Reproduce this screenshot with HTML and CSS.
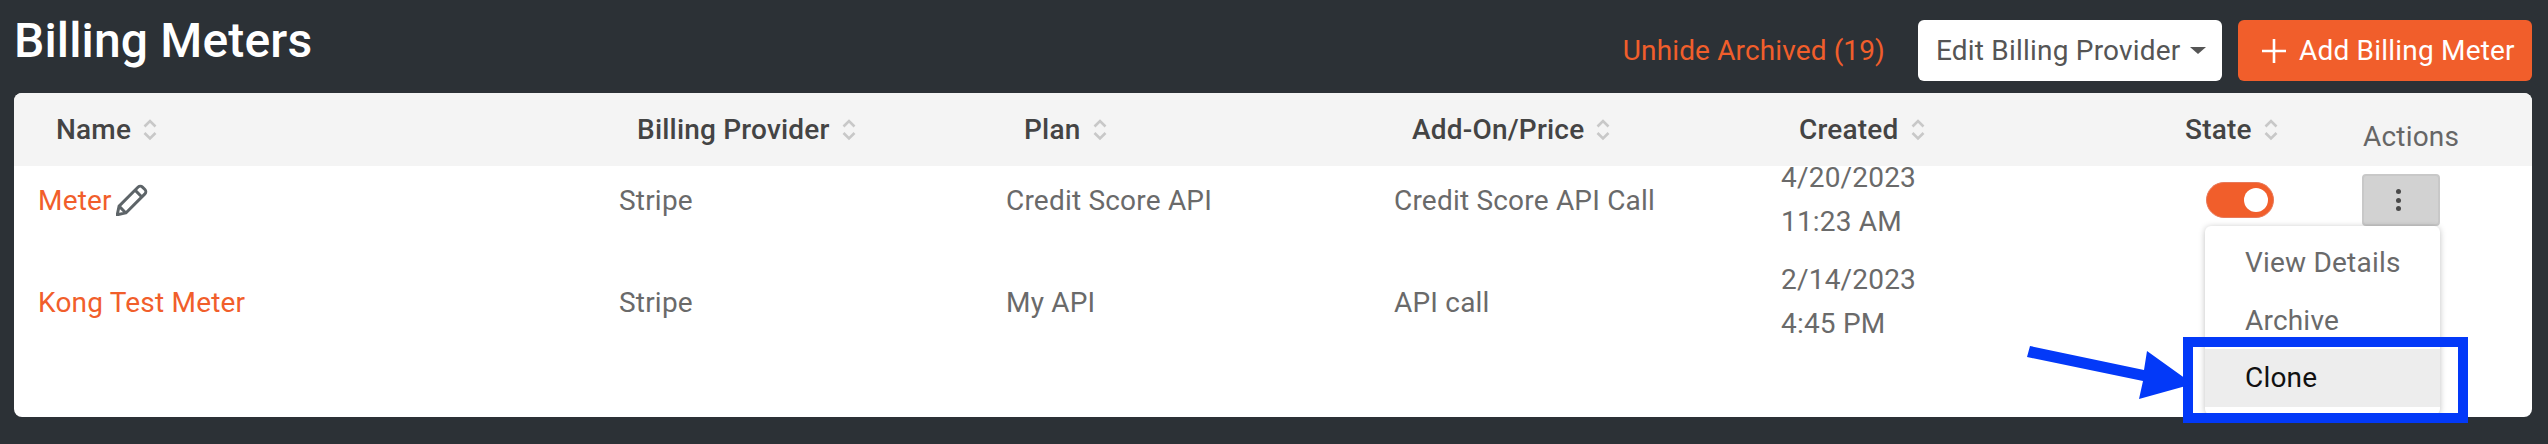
FILE: index.html
```html
<!DOCTYPE html>
<html lang="en">
<head>
<meta charset="utf-8">
<title>Billing Meters</title>
<link rel="stylesheet" href="styles.css">
</head>
<body>
<header class="topbar">
  <h1 class="title">Billing Meters</h1>
  <div class="top-actions">
    <a class="unhide">Unhide Archived (19)</a>
    <button class="btn btn-white">Edit Billing Provider<span class="caret"></span></button>
    <button class="btn btn-orange">
      <svg class="plus" viewBox="0 0 24 24" width="24" height="24"><path d="M12 0v24M0 12h24" stroke="#fff" stroke-width="2.6" fill="none"/></svg>
      Add Billing Meter
    </button>
  </div>
</header>
<main class="card">
  <div class="grid head">
    <div class="th">Name<svg class="sort" viewBox="0 0 14 24" width="14" height="24"><path d="M1.500 8.500L7 3l5.500 5.500M1.500 15L7 20.500 12.500 15" stroke="#c8c8c8" stroke-width="2.600" fill="none"/></svg></div>
    <div class="th">Billing Provider<svg class="sort" viewBox="0 0 14 24" width="14" height="24"><path d="M1.500 8.500L7 3l5.500 5.500M1.500 15L7 20.500 12.500 15" stroke="#c8c8c8" stroke-width="2.600" fill="none"/></svg></div>
    <div class="th">Plan<svg class="sort" viewBox="0 0 14 24" width="14" height="24"><path d="M1.500 8.500L7 3l5.500 5.500M1.500 15L7 20.500 12.500 15" stroke="#c8c8c8" stroke-width="2.600" fill="none"/></svg></div>
    <div class="th">Add-On/Price<svg class="sort" viewBox="0 0 14 24" width="14" height="24"><path d="M1.500 8.500L7 3l5.500 5.500M1.500 15L7 20.500 12.500 15" stroke="#c8c8c8" stroke-width="2.600" fill="none"/></svg></div>
    <div class="th">Created<svg class="sort" viewBox="0 0 14 24" width="14" height="24"><path d="M1.500 8.500L7 3l5.500 5.500M1.500 15L7 20.500 12.500 15" stroke="#c8c8c8" stroke-width="2.600" fill="none"/></svg></div>
    <div class="th">State<svg class="sort" viewBox="0 0 14 24" width="14" height="24"><path d="M1.500 8.500L7 3l5.500 5.500M1.500 15L7 20.500 12.500 15" stroke="#c8c8c8" stroke-width="2.600" fill="none"/></svg></div>
    <div class="th th-actions">Actions</div>
  </div>
  <div class="body">
    <div class="grid row">
      <div class="td"><a class="link">Meter</a>
        <svg class="pencil" viewBox="2 2 26 26" width="32" height="32"><path d="M3 27l1.500-7L20 4.500a2.500 2.500 0 0 1 3.500 0l2 2a2.500 2.500 0 0 1 0 3.500L10 25.500zM17.500 7l5.500 5.500M4.500 20l5.500 5.500" stroke="#5d6468" stroke-width="2.400" fill="none" stroke-linejoin="round"/></svg>
      </div>
      <div class="td">Stripe</div>
      <div class="td">Credit Score API</div>
      <div class="td">Credit Score API Call</div>
      <div class="td date">4/20/2023<br>11:23 AM</div>
      <div class="td"><span class="toggle"><span class="knob"></span></span></div>
      <div class="td">
        <button class="kebab"><span></span><span></span><span></span></button>
      </div>
    </div>
    <div class="grid row">
      <div class="td"><a class="link">Kong Test Meter</a></div>
      <div class="td">Stripe</div>
      <div class="td">My API</div>
      <div class="td">API call</div>
      <div class="td date">2/14/2023<br>4:45 PM</div>
      <div class="td"></div>
      <div class="td"></div>
    </div>
  </div>
  <ul class="menu">
    <li>View Details</li>
    <li>Archive</li>
    <li class="active">Clone</li>
  </ul>
</main>
<div class="callout"></div>
<svg class="arrow" viewBox="0 0 170 60" width="170" height="60"><path d="M3 0L0 11L116 35L112 53L166 38L120 5L117 24z" fill="#0339f8"/></svg>
</body>
</html>
```
FILE: styles.css
```css
* { box-sizing: border-box; }
html, body { margin: 0; height: 444px; overflow: hidden; }
body {
  position: relative;
  background: #2c3136;
  font-family: Roboto, "Liberation Sans", sans-serif;
  font-size: 28px;
  letter-spacing: 0.2px;
  color: #6a6a6a;
  padding: 20px 16px 0 14px;
}
.topbar {
  display: flex;
  justify-content: space-between;
  height: 61px;
  margin-bottom: 12px;
}
.title {
  margin: 0;
  font-size: 48px;
  font-weight: 500;
  line-height: 42px;
  letter-spacing: 0.15px;
  color: #fff;
}
.top-actions { display: flex; align-items: center; }
.unhide { color: #f15e2b; margin-right: 33px; letter-spacing: 0.13px; }
.btn {
  height: 61px;
  border: 0;
  border-radius: 6px;
  font: inherit;
  letter-spacing: inherit;
  display: flex;
  align-items: center;
}
.btn-white {
  width: 304px;
  padding-left: 18px;
  background: #fff;
  color: #555;
  margin-right: 16px;
}
.caret {
  margin-left: 9px;
  border-top: 7px solid #555;
  border-left: 8px solid transparent;
  border-right: 8px solid transparent;
}
.btn-orange {
  width: 294px;
  padding-left: 24px;
  background: #f15e2b;
  color: #fff;
}
.plus { margin-right: 13px; }
.card {
  position: relative;
  height: 324px;
  background: #fff;
  border-radius: 8px;
  overflow: hidden;
}
.grid {
  display: grid;
  grid-template-columns: 581px 387px 388px 387px 386px 195px 1fr;
  padding-left: 24px;
}
.head { height: 73px; background: #f4f4f4; align-items: center; }
.th {
  display: flex;
  align-items: center;
  padding-left: 18px;
  font-weight: 500;
  color: #444;
}
.sort { margin-left: 12px; }
.th-actions { padding: 14px 0 0 1px; font-weight: 400; color: #666; }
.body { display: flex; flex-direction: column; row-gap: 34px; }
.row { height: 68px; grid-template-rows: 68px; align-items: center; }
.td { display: flex; align-items: center; }
.link { color: #f15e2b; }
.pencil { margin-left: 4px; }
.date { display: block; line-height: 44px; }
.toggle {
  display: flex;
  justify-content: flex-end;
  align-items: center;
  width: 68px;
  height: 36px;
  margin-left: 39px;
  padding-right: 5px;
  border-radius: 18px;
  background: #f15e2b;
  border: 1px solid #e8795a;
}
.knob { width: 24px; height: 24px; border-radius: 50%; background: #fff; }
.kebab {
  display: flex;
  flex-direction: column;
  align-items: center;
  justify-content: center;
  gap: 3.500px;
  width: 78px;
  height: 52px;
  padding: 0 6px 0 0;
  background: #d2d2d2;
  border: 2px solid #c8c8c8;
  border-radius: 4px;
}
.kebab span { width: 5px; height: 5px; border-radius: 50%; background: #4a4a4a; }
.menu {
  position: absolute;
  top: 133px;
  left: 2191px;
  width: 235px;
  height: 189px;
  margin: 0;
  padding: 8px 0;
  list-style: none;
  background: #fff;
  border-radius: 6px;
  box-shadow: 0 1px 6px rgba(0,0,0,.25);
}
.menu li { height: 57.500px; line-height: 57.500px; padding-left: 40px; }
.menu .active { background: #ededed; color: #111; }
.callout {
  position: absolute;
  left: 2183px;
  top: 337px;
  width: 285px;
  height: 86px;
  border: 10px solid #0339f8;
}
.arrow { position: absolute; left: 2027px; top: 346px; }
```
